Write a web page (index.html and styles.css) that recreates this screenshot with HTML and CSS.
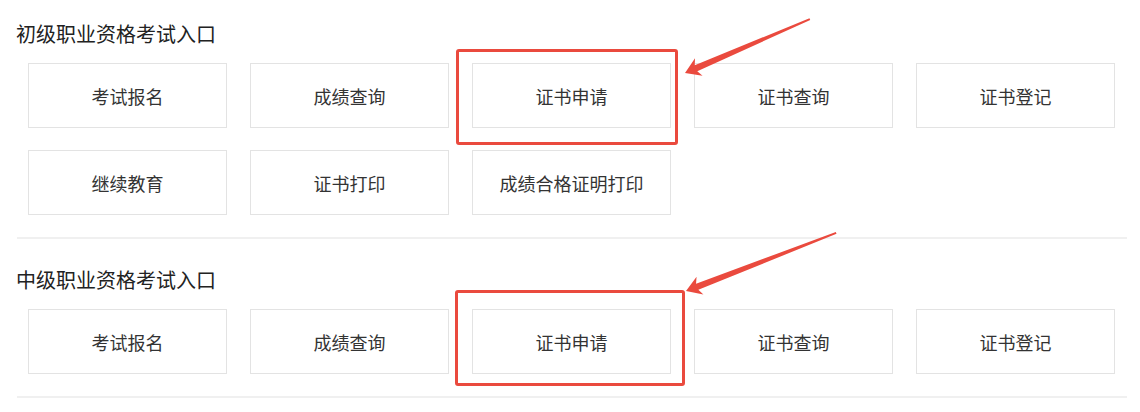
FILE: index.html
```html
<!DOCTYPE html>
<html lang="zh">
<head>
    <meta charset="UTF-8">
    <title>职业资格考试入口</title>
    <link rel="stylesheet" href="styles.css">
</head>
<body>
    <div class="page">
        <div class="section">
            <h2 class="section-title">初级职业资格考试入口</h2>
            <div class="entry-grid">
                <a class="entry">考试报名</a>
                <a class="entry">成绩查询</a>
                <a class="entry">证书申请</a>
                <a class="entry">证书查询</a>
                <a class="entry">证书登记</a>
                <a class="entry">继续教育</a>
                <a class="entry">证书打印</a>
                <a class="entry">成绩合格证明打印</a>
            </div>
        </div>
        <div class="section">
            <h2 class="section-title">中级职业资格考试入口</h2>
            <div class="entry-grid">
                <a class="entry">考试报名</a>
                <a class="entry">成绩查询</a>
                <a class="entry">证书申请</a>
                <a class="entry">证书查询</a>
                <a class="entry">证书登记</a>
            </div>
        </div>

        <!-- annotations drawn over the page -->
        <div class="mark mark-one"></div>
        <div class="mark mark-two"></div>
        <svg class="arrows" width="1140" height="412" viewBox="0 0 1140 412">
            <g transform="translate(685,73) rotate(-23.36)">
                <polygon points="0,0 15,-9.5 12,-3.2 136,-1 136,1 12,3.2 15,9.5"/>
            </g>
            <g transform="translate(686,291) rotate(-21.14)">
                <polygon points="0,0 15,-9.5 12,-3.2 161,-1 161,1 12,3.2 15,9.5"/>
            </g>
        </svg>
    </div>
</body>
</html>
```

FILE: styles.css
```css
:root {
    --text-color: #333;
    --border-color: #e3e3e3;
    --line-color: #f0f0f0;
    --mark-color: #ea4a3e;
}

* {
    box-sizing: border-box;
}

body {
    margin: 0;
    background: #fff;
    font-family: "Noto Sans CJK SC", "Microsoft YaHei", sans-serif;
    color: var(--text-color);
}

.page {
    position: relative;
    width: 1140px;
    height: 412px;
    overflow: hidden;
    padding-left: 17px;
}

.section {
    width: 1110px;
    padding-top: 28px;
    padding-bottom: 22px;
    border-bottom: 2px solid var(--line-color);
}

.section:first-child {
    padding-top: 21px;
}

.section-title {
    margin: 0 0 16px -1px;
    font-size: 20px;
    font-weight: normal;
    line-height: 26px;
    color: #222;
}

.entry-grid {
    display: grid;
    grid-template-columns: repeat(5, 199px);
    column-gap: 23px;
    row-gap: 22px;
    margin-left: 11px;
}

.entry {
    display: flex;
    align-items: center;
    justify-content: center;
    height: 65px;
    border: 1px solid var(--border-color);
    font-size: 18px;
    line-height: 1;
    color: var(--text-color);
    padding-top: 1px;
    cursor: pointer;
}

.mark {
    position: absolute;
    border: 3px solid var(--mark-color);
    border-radius: 3px;
}

.mark-one {
    left: 456px;
    top: 49px;
    width: 222px;
    height: 96px;
}

.mark-two {
    left: 455px;
    top: 290px;
    width: 230px;
    height: 96px;
}

.arrows {
    position: absolute;
    left: 0;
    top: 0;
    pointer-events: none;
}

.arrows polygon {
    fill: var(--mark-color);
}
```
